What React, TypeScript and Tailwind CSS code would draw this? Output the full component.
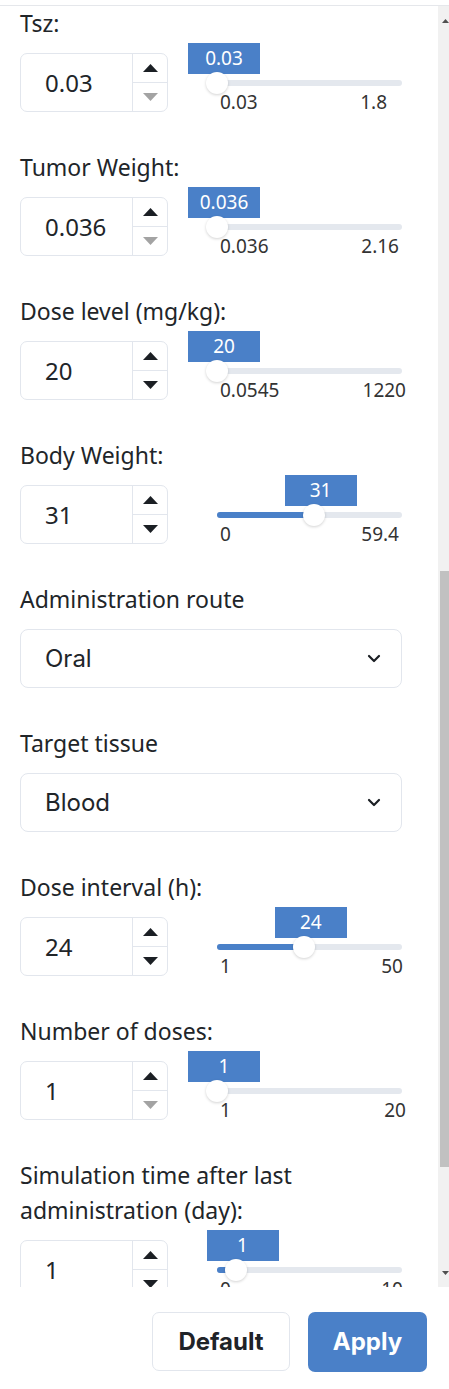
import React from "react";

type SliderRow = {
  kind: "slider";
  label: string[];
  value: string;
  min: string;
  max: string;
  pct: number;
  downDisabled: boolean;
  maxPos: string;
};
type SelectRow = { kind: "select"; label: string[]; value: string };
type Row = SliderRow | SelectRow;

const rows: Row[] = [
  { kind: "slider", label: ["Tsz:"], value: "0.03", min: "0.03", max: "1.8", pct: 0, downDisabled: true, maxPos: "right-[15px]" },
  { kind: "slider", label: ["Tumor Weight:"], value: "0.036", min: "0.036", max: "2.16", pct: 0, downDisabled: true, maxPos: "right-[3px]" },
  { kind: "slider", label: ["Dose level (mg/kg):"], value: "20", min: "0.0545", max: "1220", pct: 0, downDisabled: false, maxPos: "right-[-4px]" },
  { kind: "slider", label: ["Body Weight:"], value: "31", min: "0", max: "59.4", pct: 31 / 59.4, downDisabled: false, maxPos: "right-[3px]" },
  { kind: "select", label: ["Administration route"], value: "Oral" },
  { kind: "select", label: ["Target tissue"], value: "Blood" },
  { kind: "slider", label: ["Dose interval (h):"], value: "24", min: "1", max: "50", pct: 23 / 49, downDisabled: false, maxPos: "right-[-1px]" },
  { kind: "slider", label: ["Number of doses:"], value: "1", min: "1", max: "20", pct: 0, downDisabled: true, maxPos: "right-[-4px]" },
  { kind: "slider", label: ["Simulation time after last", "administration (day):"], value: "1", min: "0", max: "10", pct: 0.1, downDisabled: false, maxPos: "right-[-1px]" },
];

const TRACK_W = 185;

function Tri({ up, color }: { up: boolean; color: string }) {
  return (
    <svg width="15" height="8" viewBox="0 0 15 8">
      <polygon points={up ? "7.5,0 15,8 0,8" : "0,0 15,0 7.5,8"} fill={color} />
    </svg>
  );
}

function NumberBox({ value, downDisabled }: { value: string; downDisabled: boolean }) {
  return (
    <div className="w-[148px] h-[59px] shrink-0 flex border border-[#e2e6ed] rounded-[7px] bg-white">
      <div className="flex-1 flex items-center pl-[24px] text-[24px] text-[#212529]">{value}</div>
      <div className="w-[35px] flex flex-col border-l border-[#e2e6ed]">
        <div className="flex-1 flex items-center justify-center border-b border-[#e2e6ed]">
          <Tri up color="#1b1f24" />
        </div>
        <div className="flex-1 flex items-center justify-center">
          <Tri up={false} color={downDisabled ? "#a3a3a3" : "#1b1f24"} />
        </div>
      </div>
    </div>
  );
}

function Slider({ row }: { row: SliderRow }) {
  const c = row.pct * TRACK_W;
  return (
    <div className="relative ml-[49px] w-[185px] h-[59px] shrink-0">
      <div className="absolute left-0 right-0 top-[26.5px] h-[6px] rounded-full bg-[#e4e8ee]" />
      {c > 0 && (
        <div className="absolute left-0 top-[26.5px] h-[6px] rounded-l-full bg-[#4a80c8]" style={{ width: c }} />
      )}
      <div
        className="absolute top-[-10px] w-[72px] h-[31px] bg-[#4a80c8] text-white text-[19px] leading-[31px] text-center"
        style={{ left: c - 29 }}
      >
        {row.value}
      </div>
      <div
        className="absolute top-[18.5px] w-[22px] h-[22px] rounded-full bg-white shadow-[0_1px_3px_rgba(0,0,0,0.18)]"
        style={{ left: c - 11 }}
      />
      <div className="absolute left-[3px] top-[37px] text-[19px] leading-[24px] text-[#333]">{row.min}</div>
      <div className={"absolute top-[37px] text-[19px] leading-[24px] text-[#333] " + row.maxPos}>{row.max}</div>
    </div>
  );
}

function Chevron() {
  return (
    <svg width="14" height="9" viewBox="0 0 14 9">
      <polyline points="2,2 7,7 12,2" fill="none" stroke="#1b1f24" strokeWidth="2.2" strokeLinecap="round" strokeLinejoin="round" />
    </svg>
  );
}

function Group({ row }: { row: Row }) {
  return (
    <div className="mb-[38px]">
      <div className="text-[23px] leading-[35px] text-[#212529]">
        {row.label.map((l) => (
          <div key={l}>{l}</div>
        ))}
      </div>
      <div className="mt-[12px]">
        {row.kind === "slider" ? (
          <div className="flex items-center">
            <NumberBox value={row.value} downDisabled={row.downDisabled} />
            <Slider row={row} />
          </div>
        ) : (
          <div className="w-[382px] h-[59px] flex items-center justify-between border border-[#e2e6ed] rounded-[8px] pl-[24px] pr-[20px] font-['Inter',sans-serif] text-[24px] text-[#212529]">
            <span>{row.value}</span>
            <Chevron />
          </div>
        )}
      </div>
    </div>
  );
}

function Scrollbar() {
  return (
    <div className="w-[11px] shrink-0 bg-[#f1f1f1] flex flex-col">
      <div className="h-[17px] flex items-end pl-[4px]">
        <svg width="7" height="4" viewBox="0 0 7 4">
          <polygon points="3.5,0 7,4 0,4" fill="#505050" />
        </svg>
      </div>
      <div className="mt-[548px] h-[596px] ml-[2px] bg-[#c1c1c1]" />
      <div className="mt-auto mb-[12px] pl-[4px] flex">
        <svg width="7" height="4" viewBox="0 0 7 4">
          <polygon points="0,0 7,0 3.5,4" fill="#505050" />
        </svg>
      </div>
    </div>
  );
}

export default function App() {
  return (
    <div className="w-[449px] h-[1389px] bg-white flex flex-col overflow-hidden font-['Noto_Sans',sans-serif]">
      <div className="h-[6px] shrink-0 border-b border-[#e5e7eb]" />
      <div className="h-[1281px] shrink-0 flex">
        <div className="flex-1 overflow-hidden pl-[20px]">
          {rows.map((r, i) => (
            <Group key={i} row={r} />
          ))}
        </div>
        <Scrollbar />
      </div>
      <div className="flex justify-end gap-[18px] pt-[25px] pr-[22px] font-['Inter',sans-serif]">
        <button className="w-[138px] h-[59px] rounded-[7px] border border-[#e2e6ed] bg-white text-[24px] font-bold text-[#1f2328]">
          Default
        </button>
        <button className="w-[119px] h-[60px] rounded-[7px] bg-[#4a80c8] text-[24px] font-bold text-white">
          Apply
        </button>
      </div>
    </div>
  );
}
